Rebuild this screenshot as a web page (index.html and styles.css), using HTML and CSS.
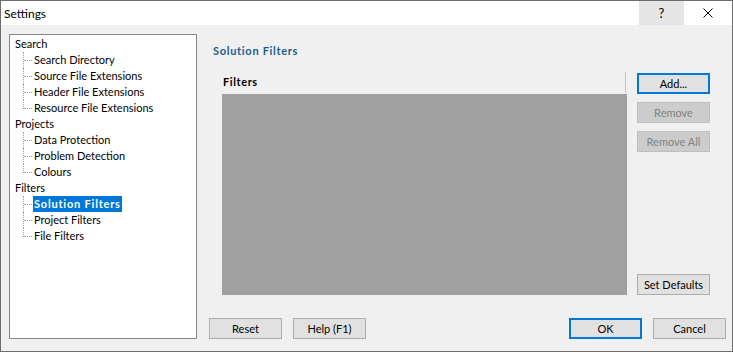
FILE: index.html
```html
<!DOCTYPE html>
<html lang="en">
<head>
  <meta charset="UTF-8">
  <title>Settings</title>
  <link rel="stylesheet" href="styles.css">
</head>
<body>

<div class="window">
  <div class="titlebar">
    <span class="title">Settings</span>
    <div class="caption-btns">
      <div class="cap-btn help">?</div>
      <div class="cap-btn close">
        <svg width="10" height="10" viewBox="0 0 10 10">
          <path d="M0.5 0.5 L9.5 9.5 M9.5 0.5 L0.5 9.5" stroke="#000" stroke-width="1" fill="none"/>
        </svg>
      </div>
    </div>
  </div>

  <div class="client">
    <div class="tree">
      <div class="node">Search</div>
      <ul class="children">
        <li><span class="label">Search Directory</span></li>
        <li><span class="label">Source File Extensions</span></li>
        <li><span class="label">Header File Extensions</span></li>
        <li><span class="label">Resource File Extensions</span></li>
      </ul>
      <div class="node">Projects</div>
      <ul class="children">
        <li><span class="label">Data Protection</span></li>
        <li><span class="label">Problem Detection</span></li>
        <li><span class="label">Colours</span></li>
      </ul>
      <div class="node">Filters</div>
      <ul class="children">
        <li><span class="label selected">Solution Filters</span></li>
        <li><span class="label">Project Filters</span></li>
        <li><span class="label">File Filters</span></li>
      </ul>
    </div>

    <div class="pane">
      <h2 class="pane-title">Solution Filters</h2>

      <div class="pane-body">
        <div class="list">
          <div class="list-header">Filters</div>
          <div class="list-body"></div>
        </div>
        <div class="side-btns">
          <button class="btn default">Add...</button>
          <button class="btn" disabled>Remove</button>
          <button class="btn" disabled>Remove All</button>
          <button class="btn push-down">Set Defaults</button>
        </div>
      </div>

      <div class="footer">
        <button class="btn">Reset</button>
        <button class="btn">Help (F1)</button>
        <span class="spacer"></span>
        <button class="btn default">OK</button>
        <button class="btn">Cancel</button>
      </div>
    </div>
  </div>
</div>

</body>
</html>
```

FILE: styles.css
```css
* { box-sizing: border-box; }

body {
  margin: 0;
  background: #f0f0f0;
  font-family: 'Lato', 'Noto Sans', sans-serif;
  font-size: 11px;
  color: #000;
}

.window {
  width: 733px;
  height: 352px;
  border: 1px solid #6e6e6e;
  background: #f0f0f0;
  display: flex;
  flex-direction: column;
}

/* title bar */
.titlebar {
  height: 24px;
  background: #fff;
  display: flex;
  align-items: center;
  flex-shrink: 0;
}
.title { padding-left: 3px; font-size: 12px; }
.caption-btns { margin-left: auto; display: flex; height: 100%; margin-right: 2px; }
.cap-btn {
  width: 45px;
  height: 100%;
  display: flex;
  align-items: center;
  justify-content: center;
}
.cap-btn.help { background: #e5e5e5; font-size: 13px; }
.cap-btn.close { margin-left: 1px; }

.client {
  flex: 1;
  display: flex;
  padding: 9px 6px 12px 8px;
}

/* tree */
.tree {
  width: 188px;
  border: 1px solid #828790;
  background: #fff;
  padding: 1px 0 0 5px;
  line-height: 16px;
}
.node { height: 16px; white-space: nowrap; }
.children {
  list-style: none;
  margin: 0 0 0 18px;
  padding: 0;
}
.children li { position: relative; height: 16px; white-space: nowrap; }
.children li::before {
  content: "";
  position: absolute;
  left: -9px;
  top: 8px;
  width: 8px;
  border-top: 1px dotted #a0a0a0;
}
.children li::after {
  content: "";
  position: absolute;
  left: -10px;
  top: 0;
  height: 16px;
  border-left: 1px dotted #a0a0a0;
}
.children li:last-child::after { height: 9px; }
.label { padding: 0 1px; display: inline-block; }
.label.selected {
  background: #0078d7;
  color: #fff;
  font-weight: bold;
  letter-spacing: 0.8px;
}

/* right pane */
.pane {
  flex: 1;
  margin-left: 12px;
  display: flex;
  flex-direction: column;
}
.pane-title {
  margin: 9px 0 0 4px;
  font-size: 11px;
  font-weight: bold;
  letter-spacing: 0.7px;
  color: #1a5c8c;
  line-height: 16px;
}
.pane-body {
  display: flex;
  margin-top: 12px;
  height: 224px;
}
.list {
  width: 405px;
  margin-left: 13px;
  display: flex;
  flex-direction: column;
}
.list-header {
  height: 23px;
  position: relative;
  padding: 4px 0 0 1px;
  font-weight: bold;
  letter-spacing: 0.6px;
}
.list-header::after {
  content: "";
  position: absolute;
  right: 1px;
  top: 1px;
  height: 21px;
  border-right: 1px solid #c6c6c6;
}
.list-body { flex: 1; background: #a0a0a0; }

.side-btns {
  margin-left: 10px;
  padding-top: 2px;
  display: flex;
  flex-direction: column;
  gap: 8px;
}
.push-down { margin-top: auto; }

.btn {
  width: 73px;
  height: 21px;
  padding: 0;
  font-family: inherit;
  font-size: 11px;
  color: #000;
  background: #e1e1e1;
  border: 1px solid #adadad;
}
.btn.default { border: 2px solid #0078d7; }
.btn:disabled {
  background: #cccccc;
  border-color: #bfbfbf;
  color: #838383;
}

.footer {
  margin-top: auto;
  display: flex;
  gap: 11px;
}
.footer .spacer { flex: 1; }
```
